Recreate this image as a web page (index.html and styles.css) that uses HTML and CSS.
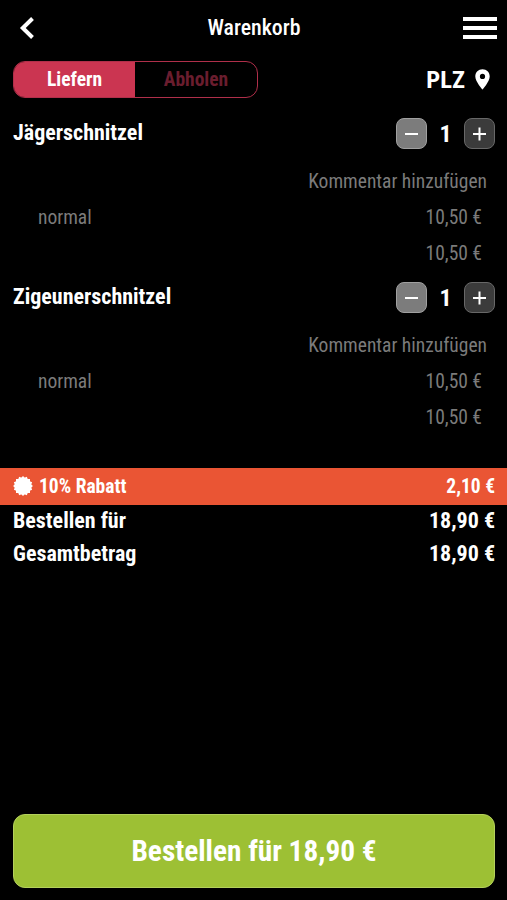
FILE: index.html
```
<!DOCTYPE html>
<html lang="de">
  <head>
    <meta charset="utf-8">
    <title>Warenkorb</title>
    <link rel="stylesheet" href="styles.css">
  </head>
  <body>
    <div class="page">
      <header class="header">
        <svg class="back" width="16" height="24" viewBox="0 0 16 24"><path d="M13.5 2.5 L3.8 12 L13.5 21.5" fill="none" stroke="#fff" stroke-width="4"/></svg>
        <h1>Warenkorb</h1>
        <div class="menu"><i></i><i></i><i></i></div>
      </header>

      <div class="options">
        <div class="switch">
          <div class="tab active">Liefern</div>
          <div class="tab">Abholen</div>
        </div>
        <div class="plz">
          <span>PLZ</span>
          <svg width="15" height="21" viewBox="0 0 15 21"><path d="M7.5 0.3 C3.4 0.3 0.3 3.4 0.3 7.4 C0.3 12.4 7.5 20.6 7.5 20.6 S14.7 12.4 14.7 7.4 C14.7 3.4 11.6 0.3 7.5 0.3 Z M7.5 4.8 A2.6 2.6 0 1 1 7.5 10 A2.6 2.6 0 1 1 7.5 4.8 Z" fill="#fff" fill-rule="evenodd"/></svg>
        </div>
      </div>

      <div class="item">
        <div class="item-head">
          <h2>Jägerschnitzel</h2>
          <div class="count">
            <button class="btn minus"></button>
            <b>1</b>
            <button class="btn plus"></button>
          </div>
        </div>
        <div class="comment">Kommentar hinzufügen</div>
        <div class="line"><span>normal</span><span>10,50 €</span></div>
        <div class="line sum"><span>10,50 €</span></div>
      </div>

      <div class="item">
        <div class="item-head">
          <h2>Zigeunerschnitzel</h2>
          <div class="count">
            <button class="btn minus"></button>
            <b>1</b>
            <button class="btn plus"></button>
          </div>
        </div>
        <div class="comment">Kommentar hinzufügen</div>
        <div class="line"><span>normal</span><span>10,50 €</span></div>
        <div class="line sum"><span>10,50 €</span></div>
      </div>

      <div class="rabatt">
        <!-- four rotated squares make the 16 teeth of the badge -->
        <svg width="20" height="20" viewBox="-10 -10 20 20" fill="#fff">
          <circle r="8.2"/>
          <rect x="-7" y="-7" width="14" height="14"/>
          <rect x="-7" y="-7" width="14" height="14" transform="rotate(22.5)"/>
          <rect x="-7" y="-7" width="14" height="14" transform="rotate(45)"/>
          <rect x="-7" y="-7" width="14" height="14" transform="rotate(67.5)"/>
        </svg>
        <span>10% Rabatt</span>
        <span class="price">2,10 €</span>
      </div>
      <div class="total"><span>Bestellen für</span><span>18,90 €</span></div>
      <div class="total"><span>Gesamtbetrag</span><span>18,90 €</span></div>

      <button class="order">Bestellen für 18,90 €</button>
    </div>
  </body>
</html>
```

FILE: styles.css
```
* {
  box-sizing: border-box;
}
body {
  margin: 0;
  background: #000;
  color: #fff;
  font-family: "Roboto Condensed", Roboto, sans-serif;
  font-stretch: 75%;
}
h1, h2 {
  margin: 0;
}
button {
  font-family: inherit;
  font-stretch: inherit;
  color: inherit;
  padding: 0;
}

.page {
  display: flex;
  flex-direction: column;
  height: 900px;
  padding-bottom: 12px;
}
.header {
  display: flex;
  align-items: center;
  justify-content: space-between;
  height: 56px;
  padding: 0 10px 0 19px;
}
.header h1 {
  font-size: 21.8px;
  font-weight: 500;
  margin-left: 10px;
  padding-bottom: 1px;
}
.menu {
  display: flex;
  flex-direction: column;
  gap: 5px;
}
.menu i {
  width: 34px;
  height: 4px;
  background: #fff;
}

.options {
  display: flex;
  justify-content: space-between;
  align-items: center;
  margin-top: 5px;
  height: 37px;
  padding: 0 17px 0 13px;
}
.switch {
  display: flex;
  width: 245px;
  height: 37px;
  border: 1px solid #b02f4a;
  border-radius: 12px;
  overflow: hidden;
}
.tab {
  flex: 1;
  text-align: center;
  line-height: 35px;
  font-size: 19.5px;
  font-weight: 700;
  color: #6a1d2e;
}
.active {
  flex: none;
  width: 121px;
  background: #cb3551;
  color: #fff;
}
.plz {
  display: flex;
  align-items: center;
  gap: 10px;
  font-size: 24.5px;
  font-weight: 700;
}
.plz span {
  padding-bottom: 1px;
}

.item {
  height: 164px;
  padding: 0 12px 0 13px;
  color: #7b7b7b;
  font-size: 19.5px;
  font-weight: 450;
}
.options + .item {
  margin-top: 18px;
}
.item-head {
  display: flex;
  justify-content: space-between;
  height: 49px;
  color: #fff;
}
.item-head h2 {
  font-size: 22px;
  line-height: 34px;
}
.count {
  display: flex;
  align-items: center;
  height: 35px;
}
.count b {
  width: 37px;
  text-align: center;
  font-size: 24px;
}
.btn {
  position: relative;
  width: 31px;
  height: 31px;
  border: 1px solid #a0a0a0;
  border-radius: 8px;
  background: #7c7c7c;
}
.btn::before, .plus::after {
  content: "";
  position: absolute;
  left: 8px;
  top: 14px;
  width: 13px;
  height: 2px;
  background: #fff;
}
.plus::after {
  transform: rotate(90deg);
}
.plus {
  background: #3b3b3b;
  border-color: #686868;
}
.comment {
  height: 35px;
  line-height: 34px;
  padding-right: 8px;
  text-align: right;
}
.line {
  display: flex;
  justify-content: space-between;
  height: 36px;
  line-height: 36px;
  padding: 0 13px 0 25px;
}
.sum {
  justify-content: flex-end;
}

.rabatt {
  display: flex;
  align-items: center;
  height: 37px;
  margin-top: 24px;
  padding: 0 12px 1px 13px;
  background: #ea5534;
  font-size: 19.5px;
  font-weight: 700;
}
.rabatt svg {
  margin-right: 6px;
}
.price {
  margin-left: auto;
}
.total {
  display: flex;
  justify-content: space-between;
  height: 33px;
  line-height: 31px;
  padding: 0 12px 0 13px;
  font-size: 22px;
  font-weight: 700;
}

.order {
  height: 74px;
  margin: auto 12px 0 13px;
  padding: 0;
  border: 1px solid #b4d05c;
  border-radius: 12px;
  background: #9dc034;
  font-size: 29.3px;
  font-weight: 700;
}
```
